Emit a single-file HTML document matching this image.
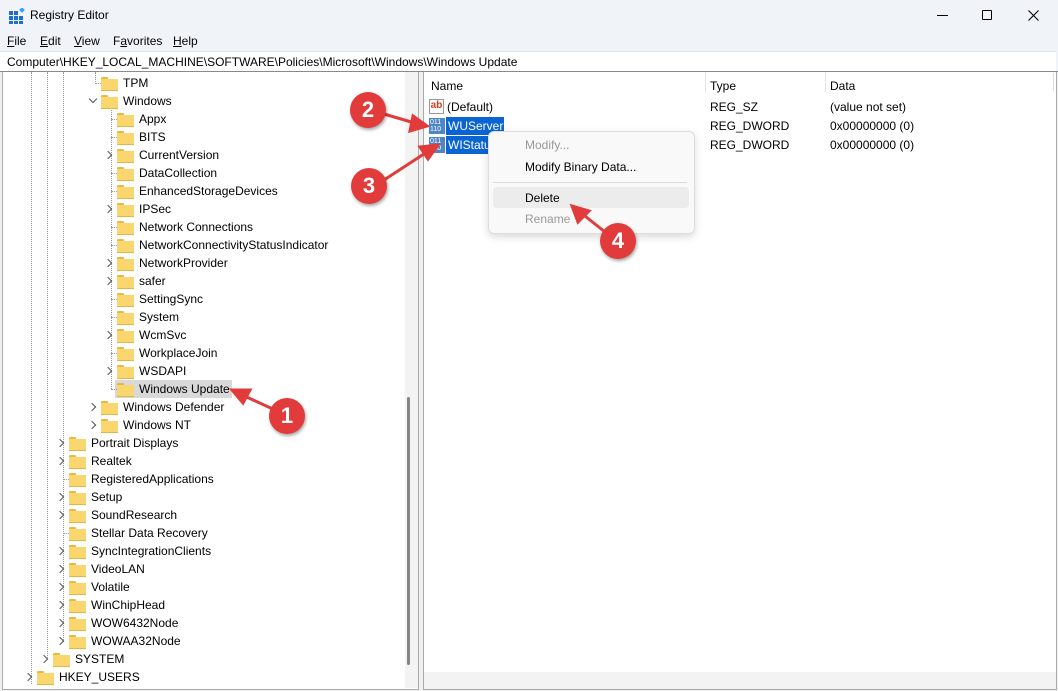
<!DOCTYPE html>
<html><head><meta charset="utf-8"><style>
*{margin:0;padding:0;box-sizing:border-box}
body{width:1058px;height:691px;overflow:hidden;background:#f0f4f9;font-family:"Liberation Sans",sans-serif;font-size:12px;color:#000;position:relative}
.a{position:absolute}
.row{position:absolute;height:18px;line-height:18px;white-space:nowrap}
.fold{position:absolute;width:17px;height:13px;top:3px}
.fold:before{content:"";position:absolute;left:0;top:0;width:7px;height:3px;background:#e8b84a;border-radius:1px 1px 0 0}
.fold:after{content:"";position:absolute;left:0;top:2px;width:17px;height:11px;background:#f9d76e;border-bottom:1px solid #e2b548}
.chev{position:absolute;width:6px;height:6px;border-right:1px solid #555;border-bottom:1px solid #555;transform:rotate(-45deg);top:6px}
.vl{position:absolute;border-left:1px dotted #999;width:0}
.hl{position:absolute;border-top:1px dotted #999;height:0;width:8px}
.circ{position:absolute;width:36px;height:36px;border-radius:50%;background:#e23b3b;color:#fff;font-weight:bold;font-size:22px;text-align:center;line-height:36px;box-shadow:1px 2px 3px rgba(0,0,0,.35)}
</style></head><body>
<svg class="a" style="left:9px;top:8px" width="16" height="16"><rect x="0" y="3" width="4" height="4" fill="#1e6fd0"/><rect x="5" y="3" width="4" height="4" fill="#1e6fd0"/><rect x="0" y="8" width="4" height="4" fill="#1e6fd0"/><rect x="5" y="8" width="4" height="4" fill="#1e6fd0"/><rect x="10" y="8" width="4" height="4" fill="#1e6fd0"/><rect x="0" y="13" width="4" height="3" fill="#1e6fd0"/><rect x="5" y="13" width="4" height="3" fill="#1e6fd0"/><rect x="10" y="13" width="4" height="3" fill="#1e6fd0"/><rect x="11" y="0" width="4" height="4" fill="#3aa0f0" transform="rotate(45 13 2)"/></svg>
<div class="a" style="left:30px;top:8px;font-size:12px">Registry Editor</div>
<div class="a" style="left:937px;top:15px;width:11px;border-top:1px solid #000"></div>
<div class="a" style="left:982px;top:10px;width:10px;height:10px;border:1px solid #000;border-radius:1px"></div>
<svg class="a" style="left:1028px;top:10px" width="11" height="11"><path d="M0.5 0.5L10.5 10.5M10.5 0.5L0.5 10.5" stroke="#000" stroke-width="1.1"/></svg>
<div class="a" style="left:7px;top:34px"><u>F</u>ile</div>
<div class="a" style="left:40px;top:34px"><u>E</u>dit</div>
<div class="a" style="left:74px;top:34px"><u>V</u>iew</div>
<div class="a" style="left:113px;top:34px">F<u>a</u>vorites</div>
<div class="a" style="left:173px;top:34px"><u>H</u>elp</div>
<div class="a" style="left:0;top:51px;width:1056px;height:20px;background:#fff;border-top:1px solid #e5e5e5"></div>
<div class="a" style="left:7px;top:55px">Computer\HKEY_LOCAL_MACHINE\SOFTWARE\Policies\Microsoft\Windows\Windows Update</div>
<div class="a" style="left:0;top:71px;width:1058px;height:620px;background:#f0f0f0;border-top:1px solid #8a8a8a"></div>
<div class="a" style="left:2px;top:72px;width:417px;height:618px;background:#fff;border:1px solid #aaa;border-top:none"></div>
<div class="a" style="left:405px;top:72px;width:13px;height:616px;background:#f3f3f3"></div>
<div class="a" style="left:407px;top:397px;width:3px;height:268px;background:#858585;border-radius:2px"></div>
<div class="a" style="left:423px;top:72px;width:634px;height:618px;background:#fff;border:1px solid #aaa;border-top:none"></div>
<div class="a" style="left:424px;top:672px;width:632px;height:17px;background:#f3f3f3"></div>
<div class="a" style="left:1053px;top:73px;width:1px;height:18px;background:#ddd"></div>
<div class="a" style="left:431px;top:79px">Name</div>
<div class="a" style="left:705px;top:73px;height:20px;border-left:1px solid #e5e5e5"></div>
<div class="a" style="left:710px;top:79px">Type</div>
<div class="a" style="left:825px;top:73px;height:20px;border-left:1px solid #e5e5e5"></div>
<div class="a" style="left:830px;top:79px">Data</div>
<div class="a" style="left:429px;top:99px;width:15px;height:15px;border:1px solid #999;background:#fff;color:#d83a1a;font-size:10px;font-weight:bold;line-height:12px;text-align:center">ab</div>
<div class="a" style="left:447px;top:100px">(Default)</div>
<div class="a" style="left:710px;top:100px">REG_SZ</div><div class="a" style="left:830px;top:100px">(value not set)</div>
<div class="a" style="left:429px;top:118px;width:16px;height:16px;background:#4f86c6;color:#fff;font-size:7px;line-height:7px;padding:1px">011<br>110</div>
<div class="a" style="left:446px;top:117px;width:58px;height:18px;background:#0a64d2"></div>
<div class="a" style="left:448px;top:119px;color:#fff">WUServer</div>
<div class="a" style="left:710px;top:119px">REG_DWORD</div><div class="a" style="left:830px;top:119px">0x00000000 (0)</div>
<div class="a" style="left:429px;top:137px;width:16px;height:16px;background:#4f86c6;color:#fff;font-size:7px;line-height:7px;padding:1px">011<br>110</div>
<div class="a" style="left:446px;top:136px;width:50px;height:18px;background:#0a64d2"></div>
<div class="a" style="left:448px;top:138px;color:#fff">WIStatu</div>
<div class="a" style="left:710px;top:138px">REG_DWORD</div><div class="a" style="left:830px;top:138px">0x00000000 (0)</div>
<div class="a" style="left:488px;top:131px;width:207px;height:103px;background:#f9f9f9;border:1px solid #ddd;border-radius:6px;box-shadow:0 3px 8px rgba(0,0,0,.15)"></div>
<div class="a" style="left:525px;top:138px;color:#9a9a9a">Modify...</div>
<div class="a" style="left:525px;top:160px">Modify Binary Data...</div>
<div class="a" style="left:493px;top:182px;width:194px;border-top:1px solid #ddd"></div>
<div class="a" style="left:493px;top:187px;width:196px;height:21px;background:#ececec;border-radius:4px"></div>
<div class="a" style="left:525px;top:191px">Delete</div>
<div class="a" style="left:525px;top:212px;color:#9a9a9a">Rename</div>
<div class="vl" style="left:31px;top:72px;height:612px"></div>
<div class="vl" style="left:47px;top:72px;height:586px"></div>
<div class="vl" style="left:63px;top:72px;height:570px"></div>
<div class="vl" style="left:95px;top:72px;height:10px"></div>
<div class="vl" style="left:111px;top:108px;height:281px"></div>
<div class="a" style="left:115px;top:380px;width:117px;height:18px;background:#d9d9d9"></div>
<div id="tree"></div>
<svg class="a" style="left:0;top:0" width="1058" height="691">
<g stroke="#e23b3b" stroke-width="3" fill="#e23b3b">
<line x1="275" y1="410" x2="240" y2="394"/><polygon points="232,390 250,390 243,403"/>
<line x1="384" y1="114" x2="418" y2="124"/><polygon points="427,126 413,116 410,131"/>
<line x1="384" y1="180" x2="430" y2="150"/><polygon points="438,145 420,147 428,159"/>
<line x1="605" y1="232" x2="580" y2="212"/><polygon points="572,206 578,222 589,211"/>
</g></svg>
<div class="circ" style="left:269px;top:398px">1</div>
<div class="circ" style="left:350px;top:92px">2</div>
<div class="circ" style="left:351px;top:168px">3</div>
<div class="circ" style="left:600px;top:223px">4</div>
<script>
var r=[["TPM",101,0],["Windows",101,2],["Appx",117,0],["BITS",117,0],["CurrentVersion",117,1],["DataCollection",117,0],["EnhancedStorageDevices",117,0],["IPSec",117,1],["Network Connections",117,0],["NetworkConnectivityStatusIndicator",117,0],["NetworkProvider",117,1],["safer",117,1],["SettingSync",117,0],["System",117,0],["WcmSvc",117,1],["WorkplaceJoin",117,0],["WSDAPI",117,1],["Windows Update",117,0],["Windows Defender",101,1],["Windows NT",101,1],["Portrait Displays",69,1],["Realtek",69,1],["RegisteredApplications",69,0],["Setup",69,1],["SoundResearch",69,1],["Stellar Data Recovery",69,0],["SyncIntegrationClients",69,1],["VideoLAN",69,1],["Volatile",69,1],["WinChipHead",69,1],["WOW6432Node",69,1],["WOWAA32Node",69,1],["SYSTEM",53,1],["HKEY_USERS",37,1]];
var h="";r.forEach(function(e,i){var y=74+i*18,x=e[1];
if(e[2]==1)h+='<div class="chev" style="left:'+(x-12)+'px;top:'+(y+6)+'px"></div>';
else if(e[2]==2)h+='<div class="chev" style="left:'+(x-11)+'px;top:'+(y+4)+'px;transform:rotate(45deg)"></div>';
else h+='<div class="hl" style="left:'+(x-6)+'px;top:'+(y+9)+'px;width:6px"></div>';
h+='<div class="fold" style="left:'+x+'px;top:'+(y+3)+'px"></div><div class="row" style="left:'+(x+22)+'px;top:'+y+'px">'+e[0]+'</div>';});
document.getElementById("tree").innerHTML=h;
</script>
</body></html>
